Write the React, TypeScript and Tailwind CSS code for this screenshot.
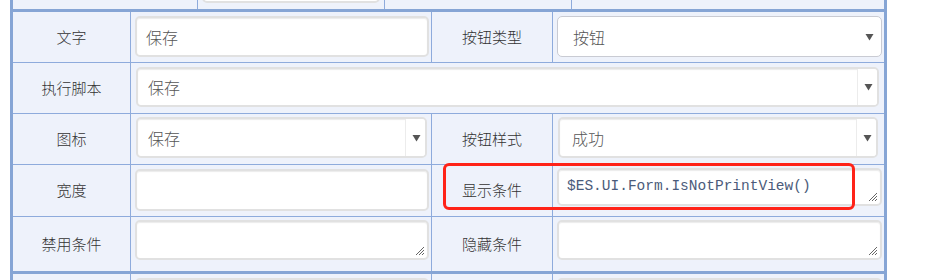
import React from "react";

const cjk = { fontFamily: '"Noto Sans CJK SC", "Noto Sans", sans-serif' };
const mono = { fontFamily: '"Liberation Mono", "Noto Sans CJK SC", monospace' };

function Arrow() {
  return (
    <svg width="9" height="8" viewBox="0 0 9 8" className="shrink-0">
      <polygon points="0.5,1 8.5,1 4.5,7.5" fill="#555" />
    </svg>
  );
}

function Grip() {
  return (
    <svg width="9" height="9" viewBox="0 0 9 9" className="absolute bottom-[3px] right-[3px]">
      <line x1="1" y1="9" x2="9" y2="1" stroke="#666" strokeWidth="1" />
      <line x1="4" y1="9" x2="9" y2="4" stroke="#666" strokeWidth="1" />
      <line x1="7" y1="9" x2="9" y2="7" stroke="#666" strokeWidth="1" />
    </svg>
  );
}

function Label({ text }: { text: string }) {
  return (
    <div className="flex items-center justify-center bg-[#eef2fb] text-[15px] font-light text-[#333]" style={cjk}>
      {text}
    </div>
  );
}

// soft grey bordered box used by inputs, textareas and the custom selects
const box =
  "relative bg-white rounded-[5px] border-2 border-[#e1e1e1] shadow-[inset_0_1px_1px_rgba(0,0,0,0.08)]";

function TextBox({ value, h, pl = "pl-[9px]" }: { value?: string; h: string; pl?: string }) {
  return (
    <div className={`${box} ${h} w-full flex items-center ${pl} text-[16px] font-light text-[#555]`} style={cjk}>
      {value}
    </div>
  );
}

function Area({ children, h }: { children?: React.ReactNode; h: string }) {
  return (
    <div className={`${box} ${h} w-full flex items-center`}>
      {children}
      <Grip />
    </div>
  );
}

function DropBox({ value, h, pl }: { value: string; h: string; pl: string }) {
  return (
    <div className={`${box} ${h} w-full flex items-stretch overflow-hidden`}>
      <div className={`flex-1 flex items-center ${pl} text-[16px] font-light text-[#555]`} style={cjk}>
        {value}
      </div>
      <div className="w-[22px] -my-[2px] -mr-[2px] bg-white border border-[#ececec] rounded-r-[5px] flex items-center justify-center">
        <Arrow />
      </div>
    </div>
  );
}

export default function App() {
  return (
    <div className="w-[938px] h-[280px] bg-white relative overflow-hidden">
      <div className="ml-[10px] w-[877px] border-x-[3px] border-[#86a5d5]">
        {/* previous block, cut off at the top */}
        <div className="grid grid-cols-[184px_186px_186px_312px] gap-x-px bg-[#8eabdc] h-[9px]">
          <div className="bg-[#eef2fb]" />
          <div className="bg-[#eef2fb] px-[4px] overflow-hidden">
            <div className="h-[20px] -mt-[17px] bg-white rounded-[5px] border-2 border-[#e1e1e1]" />
          </div>
          <div className="bg-[#eef2fb]" />
          <div className="bg-[#eef2fb]" />
        </div>
        <div className="h-[3px] bg-[#86a5d5]" />

        {/* main form */}
        <div className="grid grid-cols-[117px_300px_120px_331px] grid-rows-[50px_50px_50px_51px_54px] gap-px bg-[#8eabdc]">
          <Label text="文字" />
          <div className="bg-[#eef2fb] pl-[4px] pr-[2px] pt-[4px]">
            <TextBox value="保存" h="h-[41px]" />
          </div>
          <Label text="按钮类型" />
          <div className="bg-[#eef2fb] pl-[4px] pr-[2px] pt-[4px]">
            <div
              className="h-[41px] w-full bg-white rounded-[5px] border border-[#c9cbd3] flex items-center pl-[15px] pr-[7px] text-[16px] font-light text-[#555]"
              style={cjk}
            >
              <span className="flex-1">按钮</span>
              <Arrow />
            </div>
          </div>

          <Label text="执行脚本" />
          <div className="col-span-3 bg-[#eef2fb] px-[5px] pt-[4px]">
            <DropBox value="保存" h="h-[40px]" pl="pl-[10px]" />
          </div>

          <Label text="图标" />
          <div className="bg-[#eef2fb] pl-[5px] pr-[4px] pt-[3px]">
            <DropBox value="保存" h="h-[41px]" pl="pl-[10px]" />
          </div>
          <Label text="按钮样式" />
          <div className="bg-[#eef2fb] pl-[5px] pr-[6px] pt-[3px]">
            <DropBox value="成功" h="h-[41px]" pl="pl-[12px]" />
          </div>

          <Label text="宽度" />
          <div className="bg-[#eef2fb] pl-[4px] pr-[2px] pt-[4px]">
            <TextBox h="h-[42px]" />
          </div>
          <Label text="显示条件" />
          <div className="bg-[#eef2fb] pl-[4px] pr-[2px] pt-[3px]">
            <Area h="h-[38px]">
              <span className="pl-[8px] text-[14.5px] text-[#4b5b7a]" style={mono}>
                $ES.UI.Form.IsNotPrintView()
              </span>
            </Area>
          </div>

          <Label text="禁用条件" />
          <div className="bg-[#eef2fb] pl-[4px] pr-[2px] pt-[3px]">
            <Area h="h-[40px]" />
          </div>
          <Label text="隐藏条件" />
          <div className="bg-[#eef2fb] pl-[4px] pr-[2px] pt-[3px]">
            <Area h="h-[40px]" />
          </div>
        </div>
        <div className="h-[3px] bg-[#86a5d5]" />

        {/* next block, cut off at the bottom */}
        <div className="grid grid-cols-[117px_300px_120px_331px] gap-x-px bg-[#8eabdc] h-[6px]">
          <div className="bg-[#eef2fb]" />
          <div className="bg-[#eef2fb] pl-[4px] pr-[2px] pt-[4px]">
            <div className="h-[20px] bg-white rounded-[5px] border-2 border-[#e1e1e1]" />
          </div>
          <div className="bg-[#eef2fb]" />
          <div className="bg-[#eef2fb] pl-[4px] pr-[2px] pt-[4px]">
            <div className="h-[20px] bg-white rounded-[5px] border-2 border-[#e1e1e1]" />
          </div>
        </div>
      </div>

      {/* red annotation box */}
      <div className="absolute left-[443px] top-[163px] w-[412px] h-[47px] border-[3px] border-[#ff2318] rounded-[6px]" />
    </div>
  );
}
